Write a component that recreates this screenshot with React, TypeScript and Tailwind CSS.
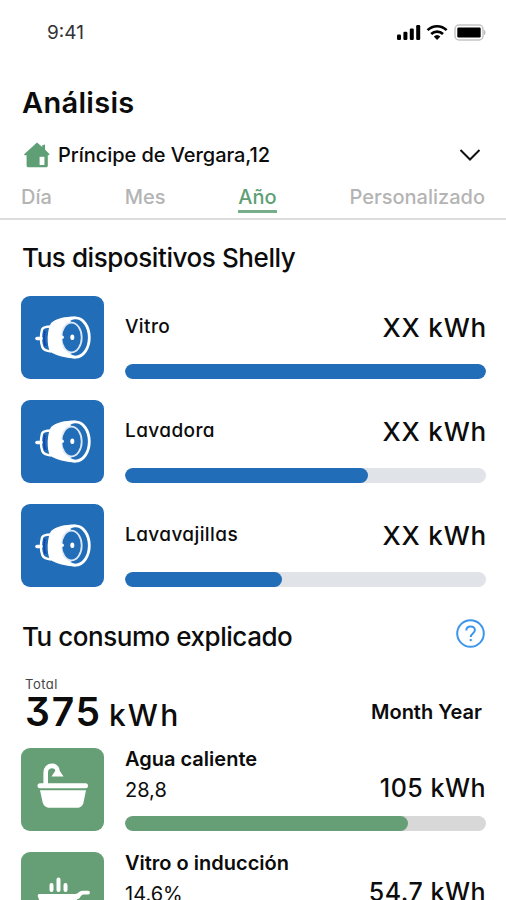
import { clsx } from 'clsx'

const tabs = [
  { label: 'Día' },
  { label: 'Mes' },
  { label: 'Año', active: true },
  { label: 'Personalizado' },
]

const devices = [
  { name: 'Vitro', value: 'XX kWh', percent: 100 },
  { name: 'Lavadora', value: 'XX kWh', percent: 67.4 },
  { name: 'Lavavajillas', value: 'XX kWh', percent: 43.6 },
]

const usages = [
  { name: 'Agua caliente', share: '28,8', value: '105 kWh', percent: 78.4, icon: BathIcon },
  { name: 'Vitro o inducción', share: '14.6%', value: '54.7 kWh', percent: 40, icon: PanIcon },
]

function StatusBar() {
  return (
    <div className="flex h-16 items-center justify-between pl-[47px] pr-[20px]">
      <span className="text-[19px] leading-none text-[#333]">9:41</span>
      <svg width="90" height="20" viewBox="0 0 90 20" fill="none">
        <g fill="#000">
          <rect x="1" y="12.5" width="4" height="5.5" rx="1.2" />
          <rect x="7.4" y="9.8" width="4" height="8.2" rx="1.2" />
          <rect x="13.8" y="6.6" width="4" height="11.4" rx="1.2" />
          <rect x="20.2" y="3" width="4" height="15" rx="1.2" />
        </g>
        <g stroke="#000" strokeWidth="2.6">
          <path d="M31.6 8.2a13.5 13.5 0 0 1 19 0" />
          <path d="M35.2 12a8.4 8.4 0 0 1 11.8 0" />
        </g>
        <path d="M37.8 14.6a4.8 4.8 0 0 1 6.6 0L41.1 18z" fill="#000" />
        <rect x="59" y="3" width="28" height="15" rx="4" stroke="#c4c4c4" strokeWidth="1.5" />
        <rect x="61.3" y="5.5" width="23.4" height="10" rx="1.2" fill="#000" />
        <path d="M88.2 8v5c1.6-.6 1.6-4.4 0-5z" fill="#aaa" />
      </svg>
    </div>
  )
}

function HouseIcon() {
  return (
    <svg width="26" height="26" viewBox="0 0 26 26">
      <path
        d="M13 .6 18.2 5V3.2L21 2.4v5.2L25.3 12c.4.8 0 1.2-.8 1.2h-.7v10.2c0 1.2-.6 1.8-1.8 1.8H4.400c-1.200 0-1.800-.6-1.800-1.800V13.200H1c-.8 0-1.200-.5-.6-1.200z"
        fill="#5f9f76"
      />
      <rect x="15.6" y="14.8" width="4.8" height="8.2" fill="#fff" />
    </svg>
  )
}

function PlugIcon() {
  return (
    <svg width="83" height="83" viewBox="0 0 83 83" fill="none">
      <path d="M16 42.5h4" stroke="#fff" strokeWidth="3.6" strokeLinecap="round" />
      <path
        d="M30 30.5c-5 0-8 .8-9 3-1.200 5-1.200 13 .3 17.500 1 3 4.500 4 9 4.500"
        stroke="#fff"
        strokeWidth="2.4"
      />
      <path d="M54 20.500c-10 0-19 2-24 6.500-4 7-4.500 22-1 28.500C34 59.500 46 62.500 55 62.500z" fill="#fff" />
      <ellipse cx="54.500" cy="41.500" rx="13.800" ry="19.600" fill="#226db8" stroke="#fff" strokeWidth="2.8" />
      <path d="M50 25.500c-5-2-10 3-12 8v17c2 5 6 9.500 12.500 7z" fill="#fff" />
      <ellipse cx="50.500" cy="41.500" rx="10.200" ry="14.800" fill="#226db8" stroke="#dbe8f6" strokeWidth="1.8" />
      <path d="M42.500 29c-1.500 3-2.200 7-2.200 12s.9 9.500 2.500 13L38 52V31z" fill="#fff" />
      <circle cx="41.200" cy="41.200" r="1.700" fill="#fff" />
      <ellipse cx="51.300" cy="41.200" rx="2" ry="2.800" fill="#fff" />
      <path d="M24 35c-1.200 4-1.200 11 .4 15" stroke="#1747ad" strokeWidth="2" />
    </svg>
  )
}

function BathIcon() {
  return (
    <svg width="83" height="83" viewBox="0 0 83 83" fill="none">
      <path d="M24.700 37V24.500c0-8.500 11.300-8.500 11.800-2" stroke="#fff" strokeWidth="4.6" />
      <path d="M30.500 28.500 36.500 19.500l6 9z" fill="#fff" />
      <rect x="16.500" y="35.300" width="50.500" height="5" rx="2.5" fill="#fff" />
      <path d="M19 42.300h46l-2.300 11.500c-.8 4.200-3 6-7 6H29.500c-4.500 0-7-1.800-8-6z" fill="#fff" />
    </svg>
  )
}

function PanIcon() {
  return (
    <svg width="83" height="83" viewBox="0 0 83 83" fill="none">
      <g stroke="#fff" strokeWidth="4" strokeLinecap="round">
        <path d="M30.500 33v5M37.500 27.500V38M44.500 33v5" />
      </g>
      <path
        d="M18.500 42h35.500c3.500 0 4-3.200 7.500-3.200H67a1.800 1.800 0 0 1 0 3.800h-4.500c-3 0-3 4.700-6.500 4.700l-2 8c-.8 3-3 4.500-6 4.500H28c-4 0-6-1.500-6.700-4.500L17 45c-.6-2 0-3 1.500-3z"
        fill="#fff"
      />
    </svg>
  )
}

function Bar({ percent, green }: { percent: number; green?: boolean }) {
  return (
    <div className={clsx('h-[15px] overflow-hidden rounded-full', green ? 'bg-[#d8d8d8]' : 'bg-[#e0e3e8]')}>
      <div
        className={clsx('h-full rounded-full', green ? 'bg-[#669f75]' : 'bg-[#226db8]')}
        style={{ width: `${percent}%` }}
      />
    </div>
  )
}

export default function App() {
  return (
    <main className="h-[900px] w-[506px] overflow-hidden whitespace-nowrap bg-white font-[Inter,sans-serif] text-[#0c0c0c]">
      <StatusBar />

      {/* Header */}
      <h1 className="mt-[21px] pl-[22px] text-[29px] font-semibold leading-9 tracking-[0.3px]">Análisis</h1>
      <div className="mt-[19px] flex h-[30px] items-center pl-6 pr-[25px]">
        <HouseIcon />
        <span className="ml-2 text-[20px] font-medium tracking-[-0.05px]">Príncipe de Vergara,12</span>
        <svg className="ml-auto" width="22" height="14" viewBox="0 0 22 14" fill="none">
          <path d="m1.500 2 9.500 9.500L20.500 2" stroke="#111" strokeWidth="2" />
        </svg>
      </div>
      <nav className="flex h-[50px] justify-between border-b-2 border-[#dcdcdc] px-[21px] pt-[15px]">
        {tabs.map((tab) => (
          <span
            key={tab.label}
            className={clsx(
              'h-[28px] text-[20px] font-medium leading-[24px]',
              tab.active ? 'border-b-[3px] border-[#76ad8a] text-[#5f9f76]' : 'text-[#b4b4b4]',
            )}
          >
            {tab.label}
          </span>
        ))}
      </nav>

      {/* Shelly devices */}
      <h2 className="mt-5 pl-[22px] text-[26px] font-medium leading-9 tracking-[-0.42px]">
        Tus dispositivos Shelly
      </h2>
      <section className="mt-5 flex flex-col gap-[21px] pl-[21px] pr-5">
        {devices.map((device) => (
          <div key={device.name} className="flex h-[83px] gap-[21px]">
            <div className="size-[83px] shrink-0 overflow-hidden rounded-[9px] bg-[#226db8]">
              <PlugIcon />
            </div>
            <div className="flex flex-1 flex-col">
              <div className="flex h-[68px] items-center justify-between pb-[5px]">
                <span className="text-[19px] font-medium tracking-[0.4px] [font-feature-settings:'cv11']">
                  {device.name}
                </span>
                <span className="-mr-px text-[26px] font-medium tracking-[0.8px]">{device.value}</span>
              </div>
              <Bar percent={device.percent} />
            </div>
          </div>
        ))}
      </section>

      {/* Consumption breakdown */}
      <div className="mt-[27px] flex h-11 justify-between pl-[22px] pr-[21px]">
        <h2 className="text-[26px] font-medium leading-[46px] tracking-[-0.46px]">Tu consumo explicado</h2>
        <svg className="mt-[5px]" width="29" height="29" viewBox="0 0 29 29" fill="none" stroke="#3d95ec" strokeWidth="2">
          <circle cx="14.500" cy="14.500" r="13.300" />
          <path d="M10.300 11.500c0-5.500 8.600-5.300 8.600-.4 0 3.400-4.200 3.300-4.200 6.900" />
          <path d="M14.700 20v2.200" />
        </svg>
      </div>
      <div className="mt-[19px] flex h-[58px] items-end justify-between pl-[25px] pr-[24px]">
        <div>
          <div className="text-[13px] leading-[16px] tracking-[0.5px] text-[#444] [font-feature-settings:'cv11']">
            Total
          </div>
          <div className="flex items-baseline leading-[39px] [font-feature-settings:'cv09']">
            <span className="text-[39px] font-semibold tracking-[1.8px]">375</span>
            <span className="ml-[7px] text-[30px] font-medium tracking-[2.2px]">kWh</span>
          </div>
        </div>
        <span className="mb-[9px] text-[20px] font-semibold leading-[28px]">Month Year</span>
      </div>
      <section className="mt-[13px] flex flex-col gap-[21px] pl-[21px] pr-5">
        {usages.map((usage) => (
          <div key={usage.name} className="flex h-[83px] gap-[21px]">
            <div className="size-[83px] shrink-0 overflow-hidden rounded-[9px] bg-[#669f75]">
              <usage.icon />
            </div>
            <div className="flex flex-1 flex-col">
              <div className="h-[24px] text-[20px] font-semibold leading-[22px]">{usage.name}</div>
              <div className="flex h-[44px] justify-between">
                <span className="text-[20px] leading-[36px]">{usage.share}</span>
                <span className="text-[25px] font-medium leading-[32px] tracking-[0.5px]">{usage.value}</span>
              </div>
              <Bar percent={usage.percent} green />
            </div>
          </div>
        ))}
      </section>
    </main>
  )
}
